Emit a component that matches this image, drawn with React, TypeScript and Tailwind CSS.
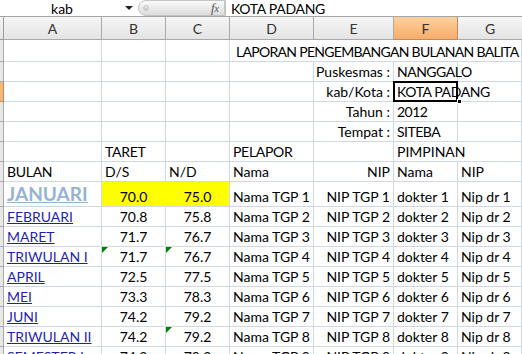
import React from "react";

type Row = {
  bulan: string;
  ds: string;
  nd: string;
  n: number;
  tri?: "bc" | "c";
};

const rows: Row[] = [
  { bulan: "FEBRUARI", ds: "70.8", nd: "75.8", n: 2 },
  { bulan: "MARET", ds: "71.7", nd: "76.7", n: 3 },
  { bulan: "TRIWULAN I", ds: "71.7", nd: "76.7", n: 4, tri: "bc" },
  { bulan: "APRIL", ds: "72.5", nd: "77.5", n: 5 },
  { bulan: "MEI", ds: "73.3", nd: "78.3", n: 6 },
  { bulan: "JUNI", ds: "74.2", nd: "79.2", n: 7 },
  { bulan: "TRIWULAN II", ds: "74.2", nd: "79.2", n: 8, tri: "c" },
  { bulan: "SEMESTER I", ds: "74.2", nd: "79.2", n: 9 },
];

const grid = "grid grid-cols-[4px_98px_64px_64px_84px_80px_64px_64px]";
const cell =
  "border-r border-b border-[#d0d7e5] flex items-end px-[3px] pb-[1px] whitespace-nowrap overflow-visible min-w-0";

const Tri = () => (
  <span className="absolute left-0 top-0 w-0 h-0 border-t-[6px] border-r-[6px] border-t-[#008000] border-r-transparent" />
);

const RowHead = ({ active }: { active?: boolean }) => (
  <div
    className={
      active
        ? "border-r border-b border-[#c28a5b] bg-[#f8b77a]"
        : "border-r border-b border-[#a9a9a9] bg-[#e8e8e8]"
    }
  />
);

export default function App() {
  return (
    <div
      className="w-[522px] h-[354px] overflow-hidden bg-white text-[14px] leading-[17px] text-black"
      style={{ fontFamily: "Lato, 'Open Sans', sans-serif" }}
    >
      {/* formula bar */}
      <div className="h-[17px] flex items-center border-b border-[#a5a5a5] bg-white">
        <div className="w-[120px] text-center pl-[4px]">kab</div>
        <div className="w-[18px] flex justify-center">
          <span className="w-0 h-0 border-l-[4px] border-r-[4px] border-t-[4px] border-l-transparent border-r-transparent border-t-[#222]" />
        </div>
        <div className="w-[87px] h-[16px] rounded-l-full bg-gradient-to-b from-[#fafafa] to-[#dcdcdc] border border-[#c4c4c4] flex items-center justify-between pl-[4px] pr-[5px]">
          <span className="w-[6px] h-[6px] rounded-full bg-gradient-to-b from-[#f0f0f0] to-[#bdbdbd] border border-[#c9c9c9]" />
          <span
            className="italic text-[13px] text-[#555]"
            style={{ fontFamily: "'Liberation Serif', serif" }}
          >
            f<span className="text-[10px]">x</span>
          </span>
        </div>
        <div className="pl-[5px] border-l border-[#c4c4c4] h-full flex items-center tracking-[-0.3px]">
          KOTA PADANG
        </div>
      </div>

      {/* column headers */}
      <div className={`${grid} h-[23px] bg-gradient-to-b from-[#f6f6f6] to-[#e3e3e3] text-[#333]`}>
        <div className="border-r border-b border-[#9c9c9c]" />
        {["A", "B", "C", "D", "E"].map((c) => (
          <div key={c} className="border-r border-b border-[#a9a9a9] flex items-center justify-center">
            {c}
          </div>
        ))}
        <div className="border-r border-b border-[#c28a5b] bg-gradient-to-b from-[#fdd19c] to-[#f8ac6b] flex items-center justify-center">
          F
        </div>
        <div className="border-b border-[#a9a9a9] flex items-center justify-center">G</div>
      </div>

      {/* row 1 */}
      <div className={`${grid} h-[22px]`}>
        <RowHead />
        <div className={cell} />
        <div className={cell} />
        <div className={cell} />
        <div className={`${cell} col-span-4 pl-[6px] tracking-[-0.7px]`}>
          LAPORAN PENGEMBANGAN BULANAN BALITA
        </div>
      </div>

      {/* info rows */}
      {[
        ["Puskesmas :", "NANGGALO"],
        ["kab/Kota :", "KOTA PADANG"],
        ["Tahun :", "2012"],
        ["Tempat :", "SITEBA"],
      ].map(([k, v], i) => (
        <div key={k} className={`${grid} h-[20px]`}>
          <RowHead active={i === 1} />
          <div className={cell} />
          <div className={cell} />
          <div className={cell} />
          <div className={cell} />
          <div className={`${cell} justify-end`}>{k}</div>
          {i === 1 ? (
            <div className={`${cell} relative border-r-0 tracking-[-0.4px]`}>
              <span className="relative z-10">{v}</span>
              <span className="absolute left-[-1px] top-[-1px] w-[65px] h-[21px] border-2 border-black" />
              <span className="absolute right-[-4px] bottom-[-3px] w-[5px] h-[5px] bg-black border border-white z-20" />
            </div>
          ) : (
            <div className={`${cell} tracking-[-0.5px]`}>{v}</div>
          )}
          <div className={cell} />
        </div>
      ))}

      {/* TARET row */}
      <div className={`${grid} h-[20px]`}>
        <RowHead />
        <div className={cell} />
        <div className={`${cell} tracking-[-0.3px]`}>TARET</div>
        <div className={cell} />
        <div className={`${cell} tracking-[-0.3px]`}>PELAPOR</div>
        <div className={cell} />
        <div className={`${cell} border-r-transparent`}>PIMPINAN</div>
        <div className={cell} />
      </div>

      {/* BULAN row */}
      <div className={`${grid} h-[20px]`}>
        <RowHead />
        <div className={`${cell} tracking-[-0.3px]`}>BULAN</div>
        <div className={cell}>D/S</div>
        <div className={cell}>N/D</div>
        <div className={cell}>Nama</div>
        <div className={`${cell} justify-end`}>NIP</div>
        <div className={cell}>Nama</div>
        <div className={cell}>NIP</div>
      </div>

      {/* JANUARI */}
      <div className={`${grid} h-[25px]`}>
        <RowHead />
        <div className={cell}>
          <span className="text-[19px] leading-[23px] font-bold underline text-[#95b3d7]">
            JANUARI
          </span>
        </div>
        <div className={`${cell} justify-center bg-[#ffff00] border-r-[#ffff00]`}>70.0</div>
        <div className={`${cell} justify-center bg-[#ffff00]`}>75.0</div>
        <div className={cell}>Nama TGP 1</div>
        <div className={`${cell} justify-end`}>NIP TGP 1</div>
        <div className={cell}>dokter 1</div>
        <div className={cell}>Nip dr 1</div>
      </div>

      {rows.map((r) => (
        <div key={r.bulan} className={`${grid} h-[20px]`}>
          <RowHead />
          <div className={cell}>
            <span className="underline text-[#1f1fb5]">{r.bulan}</span>
          </div>
          <div className={`${cell} justify-center relative`}>
            {r.tri === "bc" && <Tri />}
            {r.ds}
          </div>
          <div className={`${cell} justify-center relative`}>
            {r.tri && <Tri />}
            {r.nd}
          </div>
          <div className={cell}>Nama TGP {r.n}</div>
          <div className={`${cell} justify-end`}>NIP TGP {r.n}</div>
          <div className={cell}>dokter {r.n}</div>
          <div className={cell}>Nip dr {r.n}</div>
        </div>
      ))}
    </div>
  );
}
